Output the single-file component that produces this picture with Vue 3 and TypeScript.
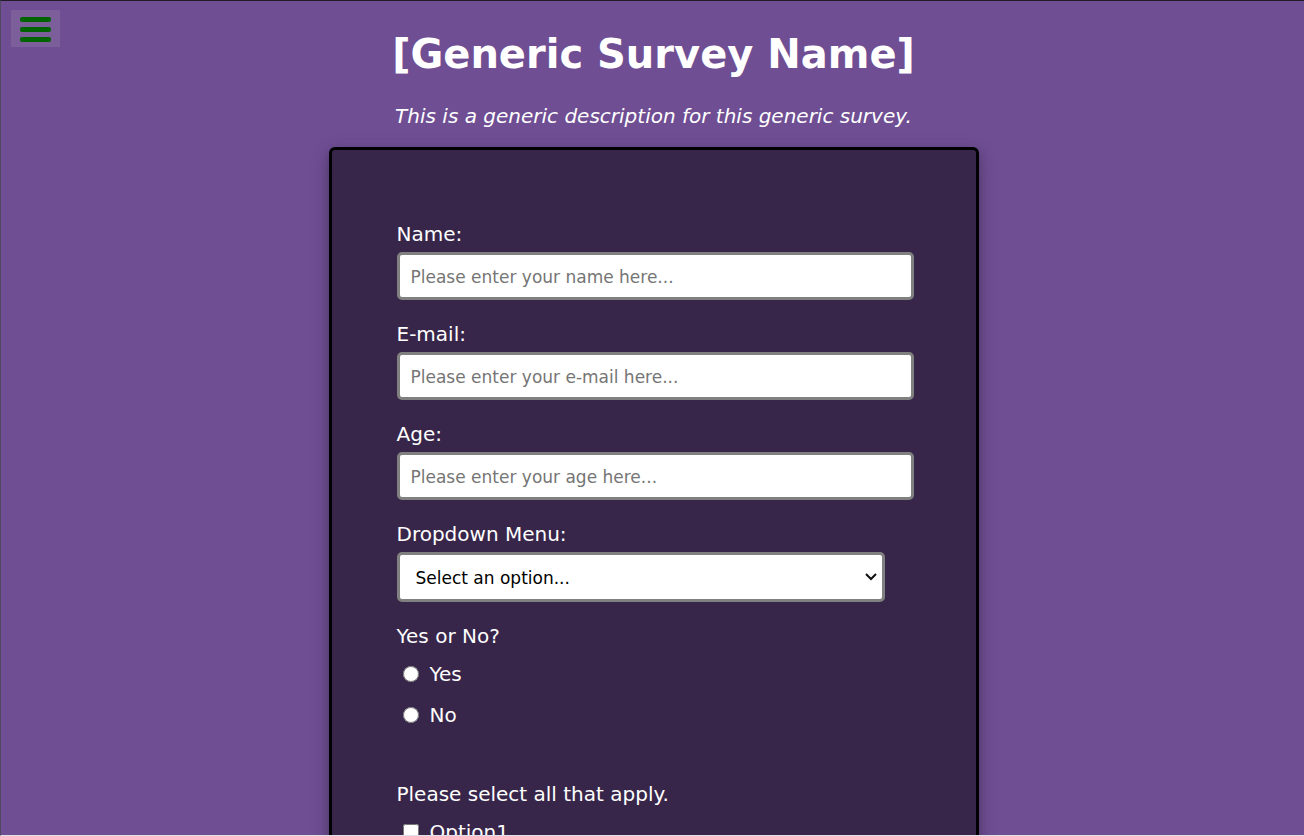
<script setup lang="ts">
import { reactive } from 'vue'

interface TextField {
  id: 'name' | 'email' | 'age'
  label: string
  type: string
  placeholder: string
}

const fields: TextField[] = [
  { id: 'name', label: 'Name:', type: 'text', placeholder: 'Please enter your name here...' },
  { id: 'email', label: 'E-mail:', type: 'email', placeholder: 'Please enter your e-mail here...' },
  { id: 'age', label: 'Age:', type: 'text', placeholder: 'Please enter your age here...' },
]

const answers = reactive({ name: '', email: '', age: '', choice: '', decision: '', options: [] as string[] })
</script>

<template>
  <div class="page">
    <button class="menu" type="button" aria-label="Menu">
      <span class="bar"></span>
      <span class="bar"></span>
      <span class="bar"></span>
    </button>

    <header class="intro">
      <h1>[Generic Survey Name]</h1>
      <p>This is a generic description for this generic survey.</p>
    </header>

    <form class="card" @submit.prevent>
      <div v-for="field in fields" :key="field.id" class="field">
        <label :for="field.id">{{ field.label }}</label>
        <input :id="field.id" v-model="answers[field.id]" class="text" :type="field.type" :placeholder="field.placeholder" />
      </div>

      <div class="field">
        <label for="choice">Dropdown Menu:</label>
        <div class="dropdown">
          <select id="choice" v-model="answers.choice">
            <option value="">Select an option...</option>
          </select>
          <svg class="chevron" width="12" height="8" viewBox="0 0 12 8" aria-hidden="true">
            <path d="M1 1 L6 6 L11 1" fill="none" stroke="#111" stroke-width="2" />
          </svg>
        </div>
      </div>

      <fieldset>
        <legend>Yes or No?</legend>
        <label class="choice"><input v-model="answers.decision" type="radio" name="decision" value="yes" />Yes</label>
        <label class="choice"><input v-model="answers.decision" type="radio" name="decision" value="no" />No</label>
      </fieldset>

      <fieldset>
        <legend>Please select all that apply.</legend>
        <label class="choice"><input v-model="answers.options" type="checkbox" value="option1" />Option1</label>
      </fieldset>
    </form>
  </div>
</template>

<style>
body {
  background: #6f4e93;
}
</style>

<style scoped>
.page {
  box-sizing: border-box;
  height: 100vh;
  overflow: auto;
  scrollbar-width: none;
  padding-left: 2px;
  border-top: 1px solid #201d29;
  border-left: 1px solid #51495f;
  border-bottom: 1px solid #e4e0ea;
  background: #6f4e93;
  color: #fff;
  font-family: Verdana, "DejaVu Sans", sans-serif;
  font-size: 20px;
  line-height: 24px;
}

.menu {
  position: absolute;
  top: 10px;
  left: 11px;
  display: flex;
  flex-direction: column;
  gap: 5px;
  padding: 7px 9px 5px;
  border: 0;
  background: #7c5e9b;
}

.bar {
  width: 31px;
  height: 5px;
  border-radius: 2px;
  background: #006400;
}

.intro {
  padding: 29px 0 19px;
  text-align: center;
}

h1 {
  margin: 0 0 25px;
  font-size: 40px;
  line-height: 49px;
}

.intro p {
  margin: 0;
  font-style: italic;
}

.card {
  box-sizing: border-box;
  max-width: 650px;
  margin: 0 auto;
  padding: 72px 62px 64px 65px;
  border: 3px solid #000;
  border-radius: 6px;
  background: #38264a;
  box-shadow: 0 4px 8px rgba(0, 0, 0, 0.2), 0 6px 20px rgba(0, 0, 0, 0.19);
}

.field {
  display: flex;
  flex-direction: column;
  gap: 6px;
  margin-bottom: 22px;
}

.text,
select {
  box-sizing: border-box;
  height: 48px;
  padding: 2px 11px 0;
  border: 3px solid #808080;
  border-radius: 5px;
  background: #fff;
  color: #000;
  font-family: inherit;
  font-size: 17px;
}

.text::placeholder {
  color: #757575;
}

.dropdown {
  display: grid;
  align-items: center;
  max-width: 488px;
}

select {
  grid-area: 1 / 1;
  width: 100%;
  height: 50px;
  padding: 2px 32px 0 16px;
  appearance: none;
}

.chevron {
  grid-area: 1 / 1;
  justify-self: end;
  margin-right: 8px;
  pointer-events: none;
}

fieldset {
  display: flex;
  flex-direction: column;
  align-items: flex-start;
  margin: 0 0 46px;
  padding: 1px 0 0;
  border: 0;
}

legend {
  margin-bottom: 5px;
  padding: 0;
}

.choice {
  display: flex;
  align-items: center;
  gap: 11px;
  padding: 8px 0 9px 6px;
}

.choice input {
  width: 16px;
  height: 16px;
  margin: 0;
}
</style>
